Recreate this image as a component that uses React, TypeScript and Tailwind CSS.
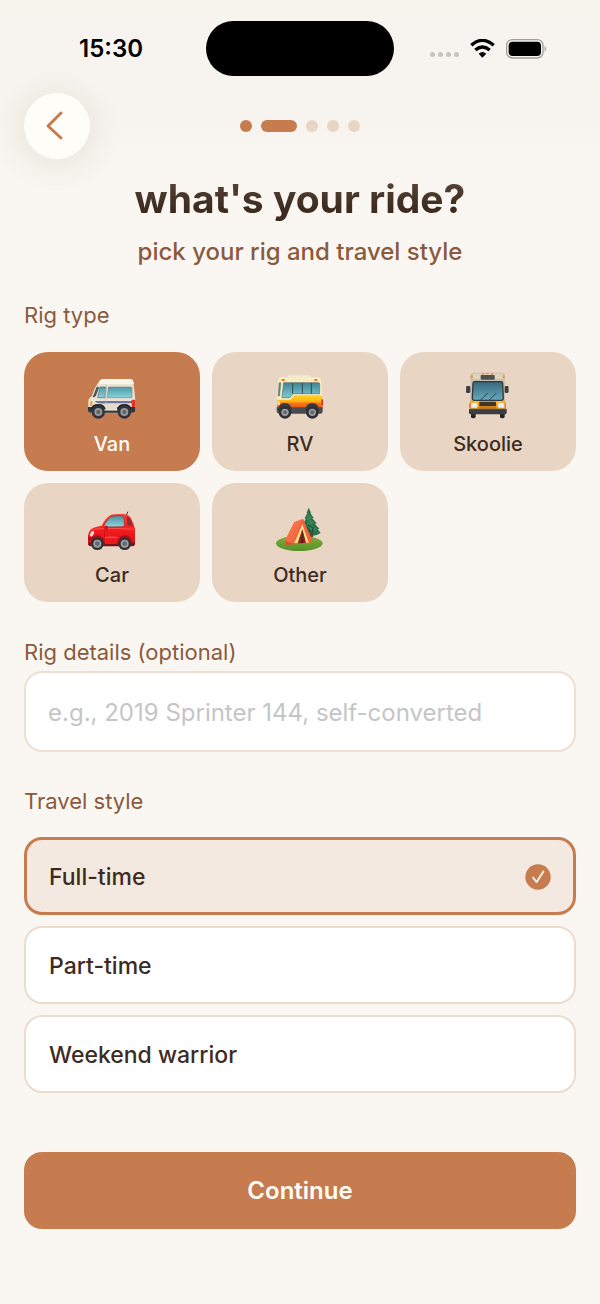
import { useState } from 'react';
import type { ReactNode } from 'react';

const VanIcon = () => (
  <svg viewBox="45 30 150 150" className="size-[50px]" aria-hidden="true">
    <defs>
      <linearGradient id="vanGlass" x1="0" y1="0" x2="0" y2="1">
        <stop offset="0" stopColor="#4f97a6" />
        <stop offset="1" stopColor="#86d3dc" />
      </linearGradient>
    </defs>
    <path d="M83 62Q86 57 97 57H174Q183 57 184 66L190 120V150Q190 158 182 158H57Q49 158 49 150V124Q50 113 60 108Q66 84 83 62Z" fill="#e9e4d6" />
    <path d="M84 61Q88 57 97 57H174Q182 57 184 65L186 72H80Z" fill="#f8f5ea" />
    <path d="M75 82H80L70 108L64 111Z" fill="#37707e" stroke="#4a4c4c" strokeWidth="3" />
    <path d="M84 81H102L99 113H77Z" fill="url(#vanGlass)" stroke="#5c6361" strokeWidth="2" />
    <path d="M109 81H177Q180 81 180 85V113H106Z" fill="url(#vanGlass)" stroke="#7c8582" strokeWidth="2" />
    <path d="M70 123H181V130H100Q84 132 70 127Z" fill="#7173a8" />
    <path d="M102 72L101 145" stroke="#bdb9ad" strokeWidth="2" />
    <path d="M56 123L62 124L60 138L54 138Z" fill="#f5a623" />
    <rect x="179" y="119" width="11" height="22" rx="2" fill="#ee2c24" />
    <path d="M48 141H190V151Q190 158 182 158H56Q48 158 48 150Z" fill="#35363a" />
    <path d="M96 132H136V152H96Z" fill="#e2dccd" />
    <path d="M56 148Q59 132 79 132Q98 132 101 148Z" fill="#24252a" />
    <path d="M135 148Q138 132 157 132Q176 132 179 148Z" fill="#24252a" />
    <circle cx="79" cy="156" r="20" fill="#333439" />
    <circle cx="79" cy="156" r="12" fill="#95989d" />
    <circle cx="79" cy="156" r="6" fill="#5c5f65" />
    <circle cx="157" cy="156" r="20" fill="#333439" />
    <circle cx="157" cy="156" r="12" fill="#95989d" />
    <circle cx="157" cy="156" r="6" fill="#5c5f65" />
  </svg>
);

const RvIcon = () => (
  <svg viewBox="45 30 150 150" className="size-[50px]" aria-hidden="true">
    <defs>
      <linearGradient id="rvBody" x1="0" y1="0" x2="0" y2="1">
        <stop offset="0" stopColor="#ffd51f" />
        <stop offset="0.45" stopColor="#ffb414" />
        <stop offset="0.6" stopColor="#f5741b" />
        <stop offset="1" stopColor="#e9541c" />
      </linearGradient>
      <linearGradient id="rvGlass" x1="0" y1="0" x2="0" y2="1">
        <stop offset="0" stopColor="#3f8392" />
        <stop offset="1" stopColor="#7ccbd8" />
      </linearGradient>
    </defs>
    <path d="M86 46H150L154 54H82Z" fill="#f2ebc8" />
    <path d="M62 52H176Q183 53 183 61L188 118V142H51V112L54 66Q54 54 62 52Z" fill="#f8edc3" />
    <path d="M52 119H92L102 106H185L188 120V146H51Z" fill="url(#rvBody)" />
    <path d="M57 68H63L59 108H54Z" fill="#4b8b97" stroke="#716c55" strokeWidth="1" />
    <path d="M71 68H176Q179 68 179 72V101H102Q98 101 95 105L90 113H66Z" fill="url(#rvGlass)" stroke="#5a6b68" strokeWidth="2" />
    <path d="M98 69V101M127 69V101M154 69V101" stroke="#2a4a50" strokeWidth="3" />
    <rect x="65" y="57" width="9" height="6" fill="#ef7a1c" />
    <rect x="163" y="57" width="9" height="6" fill="#ef7a1c" />
    <rect x="184" y="118" width="5" height="17" fill="#e8272c" />
    <path d="M52 123L60 124V135H52Z" fill="#ffd99a" />
    <path d="M50 142H188V153Q188 161 180 161H57Q50 160 50 153Z" fill="#4a4b50" />
    <path d="M54 151Q56 129 75 129Q93 129 96 151Z" fill="#393a3f" />
    <path d="M136 151Q138 129 157 129Q175 129 178 151Z" fill="#393a3f" />
    <circle cx="75" cy="157" r="19" fill="#2f3035" />
    <circle cx="75" cy="157" r="11" fill="#9a9da2" />
    <circle cx="75" cy="157" r="6" fill="#64676c" />
    <circle cx="157" cy="157" r="19" fill="#2f3035" />
    <circle cx="157" cy="157" r="11" fill="#9a9da2" />
    <circle cx="157" cy="157" r="6" fill="#64676c" />
  </svg>
);

const SkoolieIcon = () => (
  <svg viewBox="45 30 150 150" className="size-[50px]" aria-hidden="true">
    <defs>
      <linearGradient id="busGlass" x1="0" y1="0" x2="0" y2="1">
        <stop offset="0" stopColor="#39677a" />
        <stop offset="1" stopColor="#65a9bd" />
      </linearGradient>
    </defs>
    <path d="M69 148H83V170Q83 175 76 175Q69 175 69 170ZM156 148H170V170Q170 175 163 175Q156 175 156 170Z" fill="#242529" />
    <path d="M75 39Q119 36 164 39Q170 40 170 47L172 130H66L68 47Q69 40 75 39Z" fill="#c9c1ab" />
    <path d="M74 42Q119 38 165 42L166 57H73Z" fill="#ddd5bd" />
    <path d="M68 46H75V55H67ZM164 46H171V55H164ZM102 39H109V44H102ZM115 38H122V43H115ZM129 39H136V44H129Z" fill="#e99a4d" />
    <rect x="98" y="45" width="42" height="14" rx="2" fill="#4d5152" />
    <path d="M80 65H159Q164 65 164 70L166 114Q166 121 160 121H79Q73 121 73 114L75 70Q75 65 80 65Z" fill="url(#busGlass)" stroke="#33383b" strokeWidth="4" />
    <path d="M98 120L119 99M124 120L145 99" stroke="#29434e" strokeWidth="3" />
    <path d="M55 78H64Q67 78 67 83V95Q67 99 62 99H57Q54 99 54 94ZM172 78H181L182 94Q182 99 178 99H174Q170 99 170 95V83Q170 78 172 78Z" fill="#3c3e43" />
    <path d="M67 122Q119 128 171 122L174 146H64Z" fill="#f7a719" />
    <path d="M76 123Q119 127 163 123L164 128H76Z" fill="#ffc62e" />
    <rect x="94" y="125" width="50" height="14" rx="2" fill="#443421" />
    <path d="M92 140H146V146H92Z" fill="#dc7615" />
    <rect x="65" y="129" width="23" height="14" rx="4" fill="#e7eef4" />
    <rect x="150" y="129" width="23" height="14" rx="4" fill="#e7eef4" />
    <path d="M64 129H69V143H63ZM169 129H174V143H169Z" fill="#f37a2c" />
    <path d="M64 146H174Q176 146 176 149V159Q176 163 171 163H68Q63 163 63 159V149Z" fill="#3b3d42" />
    <path d="M64 149H175" stroke="#5a5c61" strokeWidth="2" />
  </svg>
);

const CarIcon = () => (
  <svg viewBox="45 18 150 150" className="size-[50px]" aria-hidden="true">
    <defs>
      <linearGradient id="carBody" x1="0" y1="0" x2="0" y2="1">
        <stop offset="0" stopColor="#ff4038" />
        <stop offset="0.5" stopColor="#f31c1f" />
        <stop offset="1" stopColor="#cf1017" />
      </linearGradient>
      <linearGradient id="carGlass" x1="0" y1="0" x2="0" y2="1">
        <stop offset="0" stopColor="#4b8d9c" />
        <stop offset="1" stopColor="#8bd7df" />
      </linearGradient>
    </defs>
    <path d="M162 64L167 51" stroke="#414141" strokeWidth="3" strokeLinecap="round" />
    <path d="M89 92Q103 66 116 60Q126 56 153 57Q170 58 176 68Q184 82 189 101V148Q187 153 180 153H56Q48 153 48 143V123Q50 106 63 99Q74 94 89 92Z" fill="url(#carBody)" />
    <path d="M96 92Q105 73 117 65Q127 61 147 62Q155 62 156 70L157 89Q157 94 151 95L100 96Q95 96 96 92Z" fill="url(#carGlass)" stroke="#a3282a" strokeWidth="2" />
    <path d="M163 64Q173 65 177 76L183 93H166Z" fill="#bd2024" />
    <path d="M168 68Q172 71 175 82L177 90H170Z" fill="#6b3b40" />
    <path d="M97 101Q96 131 105 145" fill="none" stroke="#ba1218" strokeWidth="2" />
    <path d="M60 103Q114 98 187 103" fill="none" stroke="#ff6961" strokeWidth="2" />
    <rect x="97" y="92" width="11" height="12" rx="4" fill="#d41019" />
    <ellipse cx="60" cy="116" rx="5" ry="9" transform="rotate(28 60 116)" fill="#f8d7d3" />
    <path d="M48 127H56V134H49Z" fill="#a10e15" />
    <path d="M55 143Q57 121 76 121Q94 121 98 143Z" fill="#a90e16" />
    <path d="M138 143Q140 121 158 121Q177 121 180 143Z" fill="#a90e16" />
    <path d="M49 143H188V149Q187 154 180 154H57Q49 153 49 148Z" fill="#74151a" />
    <path d="M99 124H136V147H99Z" fill="#ea1b20" />
    <path d="M99 128Q118 124 136 128" fill="none" stroke="#ff6058" strokeWidth="3" />
    <circle cx="76" cy="146" r="19" fill="#303136" />
    <circle cx="76" cy="146" r="12" fill="#9da0a4" />
    <circle cx="76" cy="146" r="7" fill="#65686d" />
    <circle cx="158" cy="146" r="19" fill="#303136" />
    <circle cx="158" cy="146" r="12" fill="#9da0a4" />
    <circle cx="158" cy="146" r="7" fill="#65686d" />
  </svg>
);

const TentIcon = () => (
  <svg viewBox="45 18 150 150" className="size-[50px]" aria-hidden="true">
    <defs>
      <linearGradient id="grass" x1="0" y1="0" x2="0" y2="1">
        <stop offset="0" stopColor="#82ad3c" />
        <stop offset="1" stopColor="#579027" />
      </linearGradient>
      <linearGradient id="tentSide" x1="0" y1="0" x2="1" y2="1">
        <stop offset="0" stopColor="#ff8052" />
        <stop offset="1" stopColor="#ed5a36" />
      </linearGradient>
    </defs>
    <ellipse cx="118" cy="145" rx="70" ry="23" fill="url(#grass)" />
    <path d="M146 38L153 53L151 54L161 69L157 70L170 85L165 87L178 101L173 103L182 114Q167 125 147 122Q132 119 127 109L132 92L128 89L137 72L134 70L142 54L140 53Z" fill="#2b704b" />
    <path d="M146 49L139 63L148 59L157 69L150 74L165 84L152 89L172 103L160 108L145 101L151 94L140 89L148 79L139 75Z" fill="#38845a" />
    <path d="M144 90L160 99L155 118M135 94L151 108L138 112" fill="none" stroke="#195137" strokeWidth="4" />
    <rect x="151" y="116" width="8" height="10" fill="#5d4529" />
    <path d="M103 82L129 72L158 140L122 146L76 150L78 132Z" fill="#dd4d31" />
    <path d="M103 82L129 72Q113 102 103 147L74 137Z" fill="url(#tentSide)" />
    <path d="M129 72L158 140L145 144L126 94L108 146L99 148Q112 105 129 72Z" fill="#f3633b" />
    <path d="M127 88L146 143L137 143L127 103L114 145L103 144Z" fill="#f7e48f" />
    <path d="M127 103L138 143L113 145Z" fill="#8b281c" />
    <path d="M128 108L130 143L123 144Z" fill="#531c16" />
  </svg>
);

interface Rig {
  id: string;
  label: string;
  icon: ReactNode;
}

const RIGS: Rig[] = [
  { id: 'van', label: 'Van', icon: <VanIcon /> },
  { id: 'rv', label: 'RV', icon: <RvIcon /> },
  { id: 'skoolie', label: 'Skoolie', icon: <SkoolieIcon /> },
  { id: 'car', label: 'Car', icon: <CarIcon /> },
  { id: 'other', label: 'Other', icon: <TentIcon /> }
];

const TRAVEL_STYLES = ['Full-time', 'Part-time', 'Weekend warrior'];

const TOTAL_STEPS = 5;
const CURRENT_STEP = 1;

const StatusBar = () => (
  <div className="grid h-[97px] grid-cols-[1fr_188px_1fr] items-center text-black">
    <span className="pl-4 text-center text-2xl font-semibold">15:30</span>
    <div className="h-[55px] rounded-full bg-black" />
    <div className="flex items-center gap-[11px] pl-9">
      <div className="flex gap-[3px] pt-3">
        <span className="size-[5px] rounded-sm bg-[#c6c3bf]" />
        <span className="size-[5px] rounded-sm bg-[#c6c3bf]" />
        <span className="size-[5px] rounded-sm bg-[#c6c3bf]" />
        <span className="size-[5px] rounded-sm bg-[#c6c3bf]" />
      </div>
      <svg viewBox="0 0 75 57" className="h-[19px] w-[25px]" aria-hidden="true">
        <path d="M4 19Q37 -11 71 19" fill="none" stroke="black" strokeWidth="10" />
        <path d="M16 33Q37 15 59 33" fill="none" stroke="black" strokeWidth="10" />
        <path d="M26 44Q37 34 49 44L37 56Z" fill="black" />
      </svg>
      <svg viewBox="0 0 123 60" className="h-5 w-[41px]" aria-hidden="true">
        <rect x="2" y="2" width="109" height="55" rx="17" fill="none" stroke="#a3a19d" strokeWidth="4" />
        <rect x="8" y="8" width="97" height="43" rx="12" fill="black" />
        <path d="M116 21Q123 29 116 38Z" fill="#8f8d8a" />
      </svg>
    </div>
  </div>
);

const App = () => {
  const [rig, setRig] = useState('van');
  const [details, setDetails] = useState('');
  const [travelStyle, setTravelStyle] = useState('Full-time');

  return (
    <div className="min-h-screen bg-[#faf7f2] bg-linear-[to_bottom,#f7f4ee_0px,#f7f3ee_110px,#faf7f2_200px] font-['Inter','Liberation_Sans',sans-serif] text-[#3d2b1f]">
      <StatusBar />

      <header className="-mt-1 grid grid-cols-[66px_1fr_66px] items-center px-6">
        <button
          type="button"
          aria-label="Back"
          className="flex size-[66px] items-center justify-center rounded-full bg-[#fffdf8] shadow-[0_4px_36px_rgba(60,45,30,0.11)]"
        >
          <svg viewBox="0 0 66 66" className="size-[66px]" aria-hidden="true">
            <path d="M37 20L24 33L37 45" fill="none" stroke="#c67c4e" strokeWidth="3" strokeLinecap="round" strokeLinejoin="round" />
          </svg>
        </button>
        <div className="flex justify-center gap-[9px]">
          {Array.from({ length: TOTAL_STEPS }, (_, i) => (
            <span
              key={i}
              className={`h-3 rounded-full ${i === CURRENT_STEP ? 'w-9' : 'w-3'} ${i <= CURRENT_STEP ? 'bg-[#c67c4e]' : 'bg-[#e8d5c4]'}`}
            />
          ))}
        </div>
      </header>

      <main className="px-6 pt-[15px] pb-[75px]">
        <h1 className="bg-linear-to-b from-[#5c4a40] to-[#3d2b1f] to-70% bg-clip-text text-center text-[39px] leading-[50px] font-bold text-transparent">
          what's your ride?
        </h1>
        <p className="pt-3 text-center text-2xl leading-8 font-medium text-[#8b5a3c]">pick your rig and travel style</p>

        <fieldset className="pt-[31px]">
          <legend className="float-left text-[22px] leading-8 text-[#8b5a3c]">Rig type</legend>
          <div className="clear-both grid grid-cols-3 gap-3 pt-[21px]">
            {RIGS.map(({ id, label, icon }) => (
              <label
                key={id}
                className={`flex cursor-pointer flex-col items-center gap-[11px] rounded-3xl pt-[18px] pb-[14px] ${rig === id ? 'bg-[#c67c4e] text-[#fffdf8]' : 'bg-[#e8d5c4]'}`}
              >
                <input type="radio" name="rig" value={id} checked={rig === id} onChange={() => setRig(id)} className="sr-only" />
                {icon}
                <span className="text-xl leading-[26px] font-medium">{label}</span>
              </label>
            ))}
          </div>
        </fieldset>

        <div className="pt-[34px]">
          <label htmlFor="rig-details" className="block text-[22px] leading-8 text-[#8b5a3c]">
            Rig details (optional)
          </label>
          <input
            id="rig-details"
            type="text"
            value={details}
            onChange={(e) => setDetails(e.target.value)}
            placeholder="e.g., 2019 Sprinter 144, self-converted"
            className="mt-[3px] block h-[81px] w-full rounded-[18px] border-2 border-[#efdfd2] bg-white px-[22px] pt-0.5 text-2xl outline-none placeholder:text-[#c5c5c7]"
          />
        </div>

        <fieldset className="pt-[33px]">
          <legend className="float-left text-[22px] leading-8 text-[#8b5a3c]">Travel style</legend>
          <div className="clear-both flex flex-col gap-[11px] pt-5">
            {TRAVEL_STYLES.map((style) => {
              const selected = travelStyle === style;
              return (
                <label
                  key={style}
                  className={`flex h-[78px] cursor-pointer items-center justify-between rounded-[18px] pt-0.5 ${selected ? 'border-3 border-[#c67c4e] bg-[#f4e9e0] px-[22px]' : 'border-2 border-[#ecdccd] bg-white px-[23px]'}`}
                >
                  <span className="text-[23px] leading-8 font-medium">{style}</span>
                  <input
                    type="radio"
                    name="travel-style"
                    value={style}
                    checked={selected}
                    onChange={() => setTravelStyle(style)}
                    className="sr-only"
                  />
                  {selected && (
                    <svg viewBox="0 0 78 78" className="size-[26px]" aria-hidden="true">
                      <circle cx="39" cy="39" r="38" fill="#c67c4e" />
                      <path d="M24 41L35 54L55 23" fill="none" stroke="#f4e9e0" strokeWidth="6" strokeLinecap="round" strokeLinejoin="round" />
                    </svg>
                  )}
                </label>
              );
            })}
          </div>
        </fieldset>

        <button type="button" className="mt-[59px] h-[77px] w-full rounded-[18px] bg-[#c67c4e] text-2xl font-semibold text-[#fffdf8]">
          Continue
        </button>
      </main>
    </div>
  );
};

export default App;
